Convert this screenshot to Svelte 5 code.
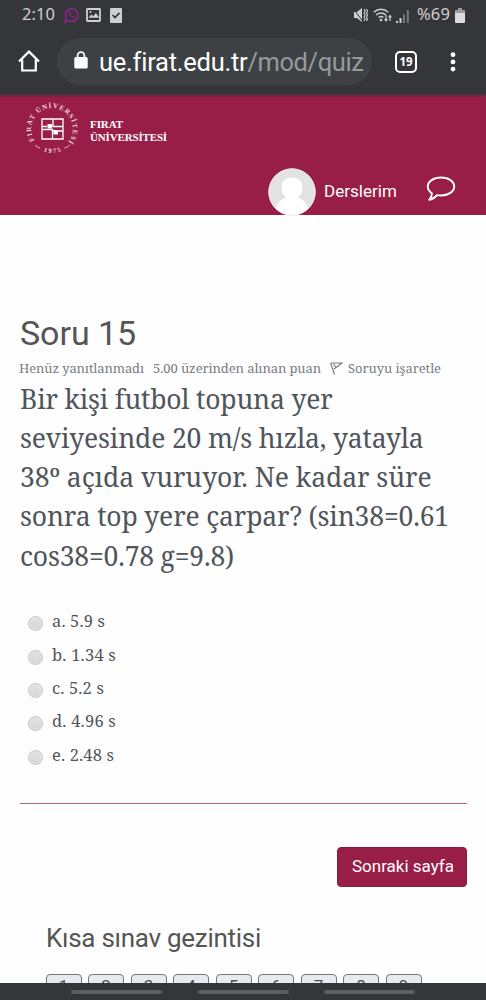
<script>
  const question = [
    ['Bir kişi futbol topuna yer', 312.5],
    ['seviyesinde 20 m/s hızla, yatayla', 403.5],
    ['38º açıda vuruyor. Ne kadar süre', 411.5],
    ['sonra top yere çarpar? (sin38=0.61', 429],
    ['cos38=0.78 g=9.8)', 214]
  ];
  const options = [
    ['a. 5.9 s', 53],
    ['b. 1.34 s', 64],
    ['c. 5.2 s', 52],
    ['d. 4.96 s', 64],
    ['e. 2.48 s', 62]
  ];
  const pages = [1, 2, 3, 4, 5, 6, 7, 8, 9];

  // Spreads the letters so that the text takes the given measure.
  function fit(node, width) {
    const natural = node.getBoundingClientRect().width;
    node.style.letterSpacing = (width - natural) / node.textContent.length + 'px';
  }
</script>

<div class="screen">
  <div class="status">
    <span class="clock"><span use:fit={33}>2:10</span></span>
    <svg class="wa" width="16" height="16" viewBox="0 0 16 16">
      <path d="M1.2 14.8l1-3.6A6.3 6.3 0 1 1 5 13.8z" fill="none" stroke="#8d2488" stroke-width="1.7" />
      <path d="M5.6 4.4c-1.4 1-.8 3 .9 4.8s3.6 2.3 4.7 1.1l-1.7-1.5-1 .7C7.6 9.1 6.9 8.3 6.6 7.5l.7-.9z" fill="#8d2488" />
    </svg>
    <svg class="pic" width="15" height="14" viewBox="0 0 15 14">
      <rect x="1" y="1" width="13" height="12" rx=".5" fill="none" stroke="#cfcfd1" stroke-width="1.8" />
      <path d="M2.5 9.5l2.8-3 2 1.7 2.5-3.2 2.9 3.8v1H2.5z" fill="#cfcfd1" />
      <circle cx="4.5" cy="4" r="1" fill="#cfcfd1" />
    </svg>
    <svg class="chk" width="12" height="15" viewBox="0 0 12 15">
      <rect width="12" height="15" rx="1" fill="#cfcfd1" />
      <path d="M2.5 7l2.5 2.5L9.5 4.8" fill="none" stroke="#35363a" stroke-width="1.7" />
    </svg>
    <span class="grow"></span>
    <svg class="mute" width="15" height="16" viewBox="0 0 15 16">
      <path d="M1 5h3l5-4v14l-5-4H1z" fill="#cfcfd1" />
      <path d="M0 1.5l10 13" stroke="#35363a" stroke-width="1" />
      <path d="M11 2l1.2 2L11 6l1.2 2L11 10l1.2 2L11 14M13.4 2l1.2 2-1.2 2 1.2 2-1.2 2 1.2 2-1.2 2" fill="none" stroke="#cfcfd1" stroke-width="1.1" />
    </svg>
    <svg class="wifi" width="19" height="16" viewBox="0 0 19 16">
      <g fill="none" stroke="#cfcfd1" stroke-width="1.5">
        <path d="M.8 5.2a10.5 10.5 0 0 1 14.4 0" />
        <path d="M3.2 8a7 7 0 0 1 9.6 0" />
        <path d="M5.6 10.5a3.8 3.8 0 0 1 4.8 0" />
      </g>
      <circle cx="8" cy="13" r="1.3" fill="#cfcfd1" />
      <path d="M13 8v5M17 14V9" stroke="#cfcfd1" stroke-width="1.2" />
      <path d="M11 12l2 3 2-3zM15 10.5l2-3 2 3z" fill="#cfcfd1" />
    </svg>
    <svg class="signal" width="13" height="13" viewBox="0 0 13 13">
      <path d="M0 11h2v2H0zM3.5 8h2v5h-2z" fill="#cfcfd1" />
      <path d="M7 4.5h2V13H7zM10.8 0h2v13h-2z" fill="#77787b" />
    </svg>
    <span class="percent"><span use:fit={33}>%69</span></span>
    <svg class="bat" width="10" height="15" viewBox="0 0 10 15">
      <path d="M3 0h4v2h3v4H0V2h3z" fill="#9a9b9d" />
      <path d="M0 5h10v9q0 1-1 1H1q-1 0-1-1z" fill="#dcdcde" />
    </svg>
  </div>

  <div class="browser">
    <svg class="home" width="22" height="22" viewBox="0 0 22 22">
      <path d="M1 11.5L11 1.6l10 9.9M4.2 9.5v11h13.6v-11" fill="none" stroke="#fff" stroke-width="2.2" />
    </svg>
    <div class="url">
      <svg width="14" height="18" viewBox="0 0 14 18">
        <rect x=".3" y="6" width="13.4" height="11.5" rx="1.5" fill="#fff" />
        <path d="M3.6 7V4.6a3.4 3.4 0 0 1 6.8 0V7" fill="none" stroke="#fff" stroke-width="1.7" />
      </svg>
      <span class="address"><span use:fit={147.5}>ue.firat.edu.tr</span><i use:fit={116}>/mod/quiz</i></span>
    </div>
    <div class="tabs">19</div>
    <svg class="dots" width="6" height="20" viewBox="0 0 6 20">
      <g fill="#fff"><circle cx="3" cy="2.7" r="2.4" /><circle cx="3" cy="9.9" r="2.4" /><circle cx="3" cy="17.1" r="2.4" /></g>
    </svg>
  </div>

  <header>
    <div class="brand">
      <svg width="54" height="58" viewBox="0 0 54 58">
        <defs>
          <path id="ring" d="M11.5 42.7A20.8 20.8 0 1 1 42.5 42.7" />
          <path id="year" d="M14 49.2A24.6 24.6 0 0 0 40 49.2" />
        </defs>
        <text class="seal" font-size="7"><textPath href="#ring" startOffset="3" textLength="91">FIRAT ÜNİVERSİTESİ</textPath></text>
        <text class="seal" font-size="6.5"><textPath href="#year" startOffset="5" textLength="18">1975</textPath></text>
        <path d="M10 45q2 2.2 5 3.2M44.5 45q-2 2.2-5 3.2" fill="none" stroke="#e3bccb" stroke-width="1" />
        <path d="M17 19h21v20H17zM28 19v7.5h10M17 29.5h10.5V39M22 26.5h-5M27.5 31H38" fill="none" stroke="#fff" stroke-width="1.3" />
        <path d="M22.5 24H27v4.5h-4.5zM28.5 30H33v4.5h-4.5z" fill="#fff" />
      </svg>
      <div class="name">
        <div><span use:fit={33}>FIRAT</span></div>
        <div><span use:fit={77}>ÜNİVERSİTESİ</span></div>
      </div>
    </div>
    <div class="user">
      <svg width="48" height="48" viewBox="0 0 48 48">
        <clipPath id="round"><circle cx="24" cy="24" r="23.5" /></clipPath>
        <g clip-path="url(#round)">
          <rect width="48" height="48" fill="#e3e3e4" />
          <path d="M24 9.5c6.5 0 10.5 4 10.5 10.3 0 4.2-1.7 7.500-4.500 9.700 5 1.700 9.500 6 10.500 12.500V48h-33v-6c1-6.500 5.500-10.800 10.500-12.500-2.800-2.200-4.500-5.500-4.500-9.700C13.500 13.500 17.500 9.500 24 9.500z" fill="#fff" />
        </g>
        <circle cx="24" cy="24" r="23.2" fill="none" stroke="#f3e4e9" stroke-width="1" />
      </svg>
      <span class="courses"><span use:fit={73}>Derslerim</span></span>
      <svg class="chat" width="30" height="26" viewBox="0 0 30 26">
        <path d="M15 1.5c7.6 0 13.2 4 13.2 9s-5.6 9-13.2 9c-1.5 0-2.7-.1-4-.4-2.3 2.7-5 4.3-7.8 4.7 1.9-2 2.8-4 2.7-6.5C3.3 15.5 1.8 13.2 1.8 10.5c0-5 5.6-9 13.2-9z" fill="none" stroke="#fff" stroke-width="1.9" stroke-linejoin="round" />
      </svg>
    </div>
  </header>

  <main>
    <h1><span use:fit={116}>Soru 15</span></h1>
    <div class="info">
      <span class="state"><span use:fit={125}>Henüz yanıtlanmadı</span></span>
      <span class="grade"><span use:fit={168}>5.00 üzerinden alınan puan</span></span>
      <svg width="13" height="13" viewBox="0 0 13 13">
        <path d="M.5.8L4.5 12.5M1 1h11L4 7M3.5 2l2.5 3.5" fill="none" stroke="#74797e" stroke-width="1.1" />
      </svg>
      <span class="flag"><span use:fit={93}>Soruyu işaretle</span></span>
    </div>
    <div class="question">
      {#each question as [text, width]}
        <div><span use:fit={width}>{text}</span></div>
      {/each}
    </div>
    <div class="options">
      {#each options as [text, width]}
        <div class="option"><span class="radio"></span><span use:fit={width}>{text}</span></div>
      {/each}
    </div>
    <div class="next"><button><span use:fit={102}>Sonraki sayfa</span></button></div>
    <h2><span use:fit={215}>Kısa sınav gezintisi</span></h2>
    <div class="pages">
      {#each pages as page}<div class="page">{page}</div>{/each}
    </div>
  </main>

  <footer><i></i><i></i><i></i></footer>
</div>

<style>
  :global(body) { background: #fff; }
  .screen {
    width: 486px; height: 1000px; overflow: hidden;
    display: flex; flex-direction: column;
    background: #fefefe; font-family: Roboto, sans-serif; white-space: nowrap;
  }
  .screen * { box-sizing: border-box; }
  svg { display: block; flex: none; }
  .status {
    height: 30px; flex: none; background: #35363a; color: #cfcfd1;
    display: flex; align-items: center; padding: 0 21px 0 22px;
    font: 16.5px/28px "Noto Sans", sans-serif;
  }
  .clock, .percent { margin-top: -2px; }
  .clock { width: 41.5px; }
  .pic { margin-left: 6px; }
  .chk { margin-left: 9px; }
  .grow { flex: 1; }
  .wifi { margin-left: 5px; }
  .signal { margin: 2px 8px 0 4px; }
  .percent { width: 38px; }
  .browser {
    height: 65px; flex: none; background: #35363a;
    display: flex; align-items: flex-start; padding: 8px 0 0 18px;
  }
  .home { margin-top: 12px; }
  .url {
    width: 315px; height: 47px; margin-left: 17px; padding-left: 17px;
    border-radius: 24px; background: #3e4144;
    display: flex; align-items: center;
  }
  .url svg { margin-top: -3px; }
  .address { margin-left: 11px; font-size: 25.5px; line-height: 46px; color: #fff; }
  .address i { font-style: normal; color: #97999c; }
  .tabs {
    width: 22px; height: 22px; margin: 13px 0 0 23px;
    border: 2px solid #fff; border-radius: 5px; color: #fff;
    font: 700 11.5px/17px "Noto Sans", sans-serif; text-align: center;
  }
  .dots { margin: 13.5px 0 0 33px; }
  header { height: 120px; flex: none; background: #991e47; color: #fff; box-shadow: inset 0 2px 1px #7e2142; }
  .brand { height: 73px; display: flex; padding: 5px 0 0 25px; }
  .seal { font-family: "Liberation Serif", serif; font-weight: 700; fill: #eed5de; }
  .name { margin: 18px 0 0 11px; font: 700 11px/12.5px "Liberation Serif", serif; }
  .user { height: 47px; display: flex; align-items: center; padding-left: 268px; }
  .courses { width: 110px; margin-top: -2px; padding-left: 8px; font-size: 17px; }
  .chat { margin-top: -6px; }
  main { flex: 1; min-height: 0; overflow: hidden; padding: 98px 19px 0 20px; }
  h1 { margin: 0; font-size: 34px; font-weight: 400; line-height: 40px; color: #555; }
  .info, .question, .options { font-family: "Noto Serif", "DejaVu Serif Condensed", serif; }
  .info { height: 26px; margin-top: 2px; margin-left: -1px; display: flex; align-items: center; font-size: 13px; color: #787d82; }
  .state { width: 134px; }
  .grade { width: 177px; }
  .flag { margin-left: 5px; }
  .question { margin-top: -1.5px; font-size: 26.5px; line-height: 39.3px; color: #50555b; }
  .options {
    margin-top: 25.5px; padding: 3px 0 32px 8px; border-bottom: 1px solid #b0627e;
    font-size: 16.5px; color: #50555b;
  }
  .option { height: 33.4px; display: flex; align-items: center; gap: 9px; line-height: 30px; }
  .radio {
    width: 15px; height: 15px; margin-top: 5px; border-radius: 50%;
    border: 1px solid #c5c5c5; background: linear-gradient(#e2e2e2, #d6d6d6);
    box-shadow: inset 0 0 0 1px #e6e6e6;
  }
  .next { display: flex; justify-content: flex-end; margin-top: 42.5px; }
  button {
    width: 130px; height: 40px; padding: 0 0 2px 14px; border: 1px solid #8b1a40; border-radius: 4px;
    background: #991e47; color: #fff; font: 17px/36px Roboto, sans-serif; text-align: left;
  }
  h2 { margin: 34.5px 0 0 26px; font-size: 26px; font-weight: 400; line-height: 34px; color: #555; }
  .pages { display: flex; gap: 6.5px; margin: 18.5px 0 0 25.5px; }
  .page {
    flex: none; width: 36px; height: 40px; padding-top: 1px;
    border: 1px solid #77777b; border-radius: 4px; background: #e9eaef;
    text-align: center; font-size: 17px; line-height: 20px; color: #505050;
  }
  footer {
    height: 17.5px; flex: none; background: #35363a; display: flex;
    gap: 35.5px; padding: 7px 0 0 71px;
  }
  footer i { width: 91px; height: 4px; border-radius: 2px; background: #5c5d60; }
</style>
